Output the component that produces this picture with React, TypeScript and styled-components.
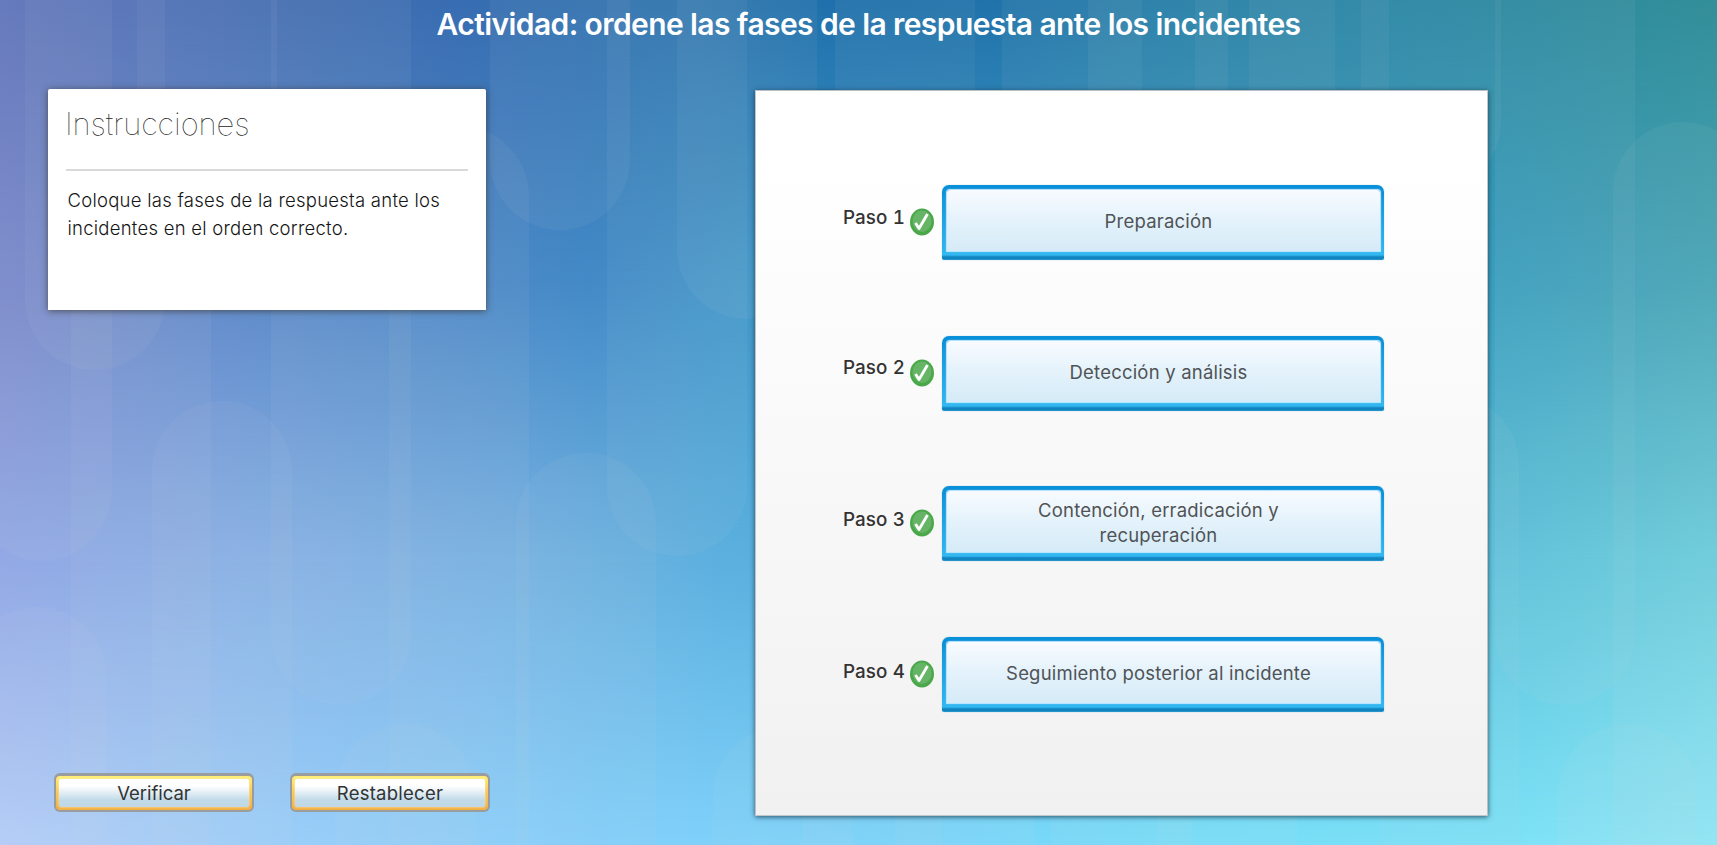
import React from 'react';
import styled, { createGlobalStyle } from 'styled-components';

const GlobalStyle = createGlobalStyle`
  * { box-sizing: border-box; }
  body { margin: 0; font-family: Inter, "Liberation Sans", sans-serif; }
  h1, h2, p, ol { margin: 0; padding: 0; font-weight: inherit; }
`;

const Stage = styled.main`
  position: relative;
  width: 1717px;
  height: 845px;
  overflow: hidden;
  display: flex;
  flex-direction: column;
`;

const BackdropSvg = styled.svg`
  position: absolute;
  inset: 0;
`;

const Title = styled.h1`
  position: relative;
  height: 88px;
  padding: 5px 0 0 20px;
  font-size: 30px;
  line-height: 38px;
  font-weight: 600;
  letter-spacing: -0.59px;
  text-align: center;
  color: #fff;
`;

const Columns = styled.div`
  position: relative;
  flex: 1;
  display: flex;
  justify-content: space-between;
  padding: 0 229px 29px 48px;
`;

const Sidebar = styled.section`
  display: flex;
  flex-direction: column;
  justify-content: space-between;
  padding-bottom: 4px;
`;

const Card = styled.article`
  width: 438px;
  height: 221px;
  margin-top: 0.5px;
  padding: 14px 18px;
  background: #fff;
  border-radius: 2px 2px 0 0;
  box-shadow: 0 1px 7px rgba(60, 60, 60, 0.8);
`;

const CardTitle = styled.h2`
  height: 68.5px;
  border-bottom: 2px solid #d9d9d9;
  font-size: 31px;
  line-height: 42px;
  font-weight: 100;
  letter-spacing: -0.1px;
  text-indent: -1px;
  color: #222;
`;

const CardText = styled.p`
  padding: 15px 0 0 1.5px;
  font-size: 18.5px;
  line-height: 28px;
  font-weight: 300;
  letter-spacing: 0.25px;
  white-space: pre-line;
  color: #151515;
`;

const Actions = styled.div`
  display: flex;
  gap: 36px;
  padding-left: 6px;
`;

const ActionButton = styled.button`
  width: 200px;
  height: 39px;
  padding: 3px 2px 2px;
  border: 0;
  border-radius: 6px;
  background: #999da0;
  display: flex;
`;

const ActionRim = styled.span`
  flex: 1;
  display: flex;
  padding: 3px;
  border-radius: 4px;
  background: linear-gradient(#ffef78, #fbc95a 45%, #f2ae45);
`;

const ActionFace = styled.span<{ $spacing: number }>`
  flex: 1;
  border-radius: 2px;
  background: linear-gradient(#fff 25%, #c2dbe9 75%, #c0d8e6);
  box-shadow: 0 0 2px #fff6d0;
  font: 400 18.5px/29px Inter, "Liberation Sans", sans-serif;
  letter-spacing: ${(p) => p.$spacing}px;
  text-align: center;
  color: #333;
`;

const Board = styled.section`
  width: 733px;
  height: 726px;
  margin-top: 2px;
  padding: 94px 103px 0 87px;
  background: linear-gradient(#fff 10%, #f1f1f1);
  border: 1px solid rgba(150, 160, 165, 0.6);
  box-shadow: 0 1px 5px rgba(20, 50, 70, 0.8);
`;

const Steps = styled.ol`
  list-style: none;
  display: flex;
  flex-direction: column;
  gap: 75.6px;
`;

const Step = styled.li`
  display: flex;
  height: 75px;
`;

const StepLabel = styled.span<{ $drop: number }>`
  width: 67px;
  padding-top: ${(p) => p.$drop}px;
  font-size: 18.8px;
  line-height: 24px;
  font-weight: 500;
  letter-spacing: 0.1px;
  font-variant-numeric: tabular-nums;
  color: #333;
  white-space: nowrap;
`;

const CheckIcon = styled.svg`
  width: 26px;
  height: 28px;
  margin: 23px 7px 0 -1px;
`;

const StepBox = styled.div`
  width: 442px;
  padding: 5px 4px 9px 5px;
  display: flex;
  border-radius: 7px 7px 2px 2px;
  background: linear-gradient(#0990d8 6px, #1798df 20%, #2db2ef 62px, #33b8f2 70px, #1183bd 72px, #0f86c2 74px, #3b9fd0);
  box-shadow: 0 0 1px #5cadd3;
`;

const StepFace = styled.div`
  flex: 1;
  display: flex;
  align-items: center;
  justify-content: center;
  border-radius: 3px 3px 0 0;
  background: linear-gradient(#f8fbff, #e4f2fb 50%, #d5ebf7);
  box-shadow: 0 0 1px 0.5px #c7eaff;
  font-size: 18.5px;
  line-height: 25px;
  letter-spacing: 0.2px;
  text-align: center;
  white-space: pre-line;
  color: #505356;
  padding: 2px 10px 0 0;
`;

type Row = { y: number; stops: [number, string][] };

const skyRows: Row[] = [
  { y: 0, stops: [[0, '#5f74bb'], [110, '#5472b8'], [300, '#456fb2'], [460, '#386db2'], [700, '#2e76af'], [830, '#1f70ac'], [990, '#2073ab'], [1150, '#267ea8'], [1400, '#2987a5'], [1717, '#338f99']] },
  { y: 280, stops: [[0, '#7b89cb'], [250, '#5e8ac9'], [450, '#5089c7'], [590, '#438ac7'], [740, '#4297c9'], [1500, '#3c9fbf'], [1717, '#48a5b5']] },
  { y: 560, stops: [[0, '#93a9e5'], [250, '#88b1e5'], [500, '#78b2e2'], [740, '#5ab0de'], [1500, '#5cc2db'], [1717, '#6ccddb']] },
  { y: 845, stops: [[0, '#b4cdf8'], [250, '#9dcef8'], [600, '#82cffa'], [900, '#7ad4fa'], [1200, '#77ddf8'], [1500, '#7ce1f6'], [1717, '#90e6f6']] },
];

// Left edge, top and bottom of each translucent capsule; all are 140 wide.
const capsules: [number, number, number][] = [
  [25, -100, 370], [-28, -100, 561], [71, 210, 1000], [137, -100, 290],
  [152, 401, 1000], [271, -100, 705], [389, 126, 1000], [490, -100, 230],
  [607, -100, 556], [677, -100, 319], [835, -100, 500], [1002, -100, 500],
  [1088, -100, 500], [1195, -100, 500], [1249, -100, 400], [1361, -100, 192],
  [1495, -100, 705], [1613, 122, 1000], [1379, 395, 1000], [1558, 724, 1000],
  [335, 724, 1000], [713, 726, 1000], [516, 453, 1000], [-33, 607, 1000],
  [802, 600, 1000], [895, 600, 1000], [1051, 600, 1000], [1157, 600, 1000],
];

function Backdrop() {
  return (
    <BackdropSvg width="1717" height="845" aria-hidden="true">
      <defs>
        {skyRows.map((row, i) => (
          <linearGradient key={row.y} id={`row${i}`} gradientUnits="userSpaceOnUse" x1="0" x2="1717">
            {row.stops.map(([x, color]) => (
              <stop key={x} offset={x / 1717} stopColor={color} />
            ))}
          </linearGradient>
        ))}
        {skyRows.slice(1).map((row, i) => (
          <React.Fragment key={row.y}>
            <linearGradient id={`fade${i + 1}`} gradientUnits="userSpaceOnUse" x1="0" x2="0" y1={skyRows[i].y} y2={row.y}>
              <stop offset="0" stopColor="#fff" stopOpacity="0" />
              <stop offset="1" stopColor="#fff" />
            </linearGradient>
            <mask id={`mask${i + 1}`} maskUnits="userSpaceOnUse" x="0" y="0" width="1717" height="845">
              <rect width="1717" height="845" fill={`url(#fade${i + 1})`} />
            </mask>
          </React.Fragment>
        ))}
      </defs>
      {skyRows.map((row, i) => (
        <rect key={row.y} width="1717" height="845" fill={`url(#row${i})`} mask={i ? `url(#mask${i})` : undefined} />
      ))}
      {capsules.map(([x, top, bottom]) => (
        <rect key={`${x}/${top}`} x={x} y={top} width="140" height={bottom - top} rx="70" fill="#d8e4e4" fillOpacity="0.06" />
      ))}
    </BackdropSvg>
  );
}

function Check() {
  return (
    <CheckIcon viewBox="0 0 26 28" aria-hidden="true">
      <ellipse cx="13" cy="14" rx="12" ry="13.5" fill="#4aa84a" />
      <ellipse cx="13" cy="13.2" rx="9.5" ry="10.8" fill="#66b566" />
      <path d="M6.5 15 L10 20.5 L18.5 6" fill="none" stroke="#fff" strokeWidth="2.8" strokeLinejoin="round" />
    </CheckIcon>
  );
}

const steps = [
  { label: 'Paso 1', text: 'Preparación', drop: 21 },
  { label: 'Paso 2', text: 'Detección y análisis', drop: 20.5 },
  { label: 'Paso 3', text: 'Contención, erradicación y\nrecuperación', drop: 21.5 },
  { label: 'Paso 4', text: 'Seguimiento posterior al incidente', drop: 23 },
];

const actions = [
  { label: 'Verificar', spacing: -0.05 },
  { label: 'Restablecer', spacing: 0.25 },
];

export default function App() {
  return (
    <Stage>
      <GlobalStyle />
      <Backdrop />
      <Title>Actividad: ordene las fases de la respuesta ante los incidentes</Title>
      <Columns>
        <Sidebar>
          <Card>
            <CardTitle>Instrucciones</CardTitle>
            <CardText>{'Coloque las fases de la respuesta ante los\nincidentes en el orden correcto.'}</CardText>
          </Card>
          <Actions>
            {actions.map((a) => (
              <ActionButton key={a.label}>
                <ActionRim>
                  <ActionFace $spacing={a.spacing}>{a.label}</ActionFace>
                </ActionRim>
              </ActionButton>
            ))}
          </Actions>
        </Sidebar>
        <Board>
          <Steps>
            {steps.map((s) => (
              <Step key={s.label}>
                <StepLabel $drop={s.drop}>{s.label}</StepLabel>
                <Check />
                <StepBox>
                  <StepFace>{s.text}</StepFace>
                </StepBox>
              </Step>
            ))}
          </Steps>
        </Board>
      </Columns>
    </Stage>
  );
}
